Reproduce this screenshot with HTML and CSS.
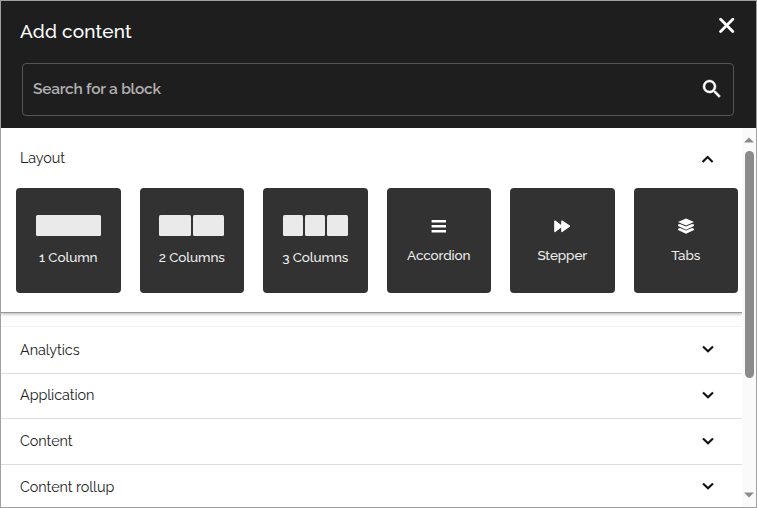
FILE: index.html
```html
<!DOCTYPE html>
<html lang="en">
<head>
<meta charset="utf-8">
<title>Add content</title>
<link rel="stylesheet" href="styles.css">
</head>
<body>
<div class="dialog">
  <header class="header">
    <div class="title-row">
      <h1 class="title">Add content</h1>
      <svg class="close" width="16" height="16" viewBox="0 0 16 16"><path d="M1.6 2.3 13.8 14.5M13.8 2.3 1.6 14.5"/></svg>
    </div>
    <div class="search">
      <span class="placeholder">Search for a block</span>
      <svg width="24" height="24" viewBox="0 0 24 24"><path fill="#fff" stroke="#fff" stroke-width=".5" d="M15.5 14h-.79l-.28-.27A6.47 6.47 0 0 0 16 9.5 6.5 6.5 0 1 0 9.5 16c1.61 0 3.09-.59 4.23-1.57l.27.28v.79l5 4.99L20.49 19l-4.99-5zm-6 0C7.01 14 5 11.99 5 9.5S7.01 5 9.5 5 14 7.01 14 9.5 11.99 14 9.5 14z"/></svg>
    </div>
  </header>
  <div class="body">
    <main class="list">
      <section class="layout">
        <div class="layout-head"><span>Layout</span><svg class="chev" width="12" height="8" viewBox="0 0 12 8"><path d="M.6 7 5.6 2 10.6 7"/></svg></div>
        <div class="cards">
          <div class="card"><div class="cols"><i></i></div><span class="label">1 Column</span></div>
          <div class="card"><div class="cols"><i></i><i></i></div><span class="label">2 Columns</span></div>
          <div class="card"><div class="cols"><i></i><i></i><i></i></div><span class="label">3 Columns</span></div>
          <div class="card icon-card"><svg width="18" height="18" viewBox="0 0 18 18"><path fill="#fff" d="M1.6 3h14.4v2.6H1.6zM1.6 8h14.4v2.6H1.6zM1.6 13h14.4v2.6H1.6z"/></svg><span class="label">Accordion</span></div>
          <div class="card icon-card"><svg width="18" height="18" viewBox="0 0 18 18"><path fill="#fff" stroke="#fff" stroke-width="1.4" stroke-linejoin="round" d="M1.9 4.1 8.9 9.2V4.1L16.4 9.2 8.9 14.4V9.2L1.9 14.4z"/></svg><span class="label">Stepper</span></div>
          <div class="card icon-card"><svg width="18" height="18" viewBox="0 0 18 18"><g fill="#fff"><path d="M9 1.5 17 5 9 8.6 1 5z"/><path d="M1 7.6 3 7 9 9.6 15 7l2 .6v1.5l-8 3.6-8-3.6z"/><path d="m1 11.7 2-.7 6 2.6 6-2.6 2 .7v1.4L9 16.8 1 13.1z"/></g></svg><span class="label">Tabs</span></div>
        </div>
      </section>
      <section class="groups">
        <div class="row r1"><span>Analytics</span><svg class="chev" width="12" height="8" viewBox="0 0 12 8"><path d="M1 1.4 6 6.2 11 1.4"/></svg></div>
        <div class="row r2"><span>Application</span><svg class="chev" width="12" height="8" viewBox="0 0 12 8"><path d="M1 1.4 6 6.2 11 1.4"/></svg></div>
        <div class="row r3"><span>Content</span><svg class="chev" width="12" height="8" viewBox="0 0 12 8"><path d="M1 1.4 6 6.2 11 1.4"/></svg></div>
        <div class="row r4"><span>Content rollup</span><svg class="chev" width="12" height="8" viewBox="0 0 12 8"><path d="M1 1.4 6 6.2 11 1.4"/></svg></div>
      </section>
    </main>
    <div class="scrollbar">
      <svg width="10" height="6" viewBox="0 0 10 6"><path d="M0 5.5 5 .5l5 5z"/></svg>
      <div class="thumb"></div>
      <svg width="10" height="6" viewBox="0 0 10 6"><path d="M0 .5h10l-5 5z"/></svg>
    </div>
  </div>
</div>
</body>
</html>
```
FILE: styles.css
```css
* { box-sizing: border-box; }
body { margin: 0; font-family: Raleway, Lato, sans-serif; color: #222; overflow: hidden; }
svg { display: block; flex: none; }
.dialog { width: 757px; height: 508px; border: 1px solid #a0a0a0; display: flex; flex-direction: column; background: #fff; overflow: hidden; }
.header { height: 127px; background: #1e1e1e; padding: 0 22px 0 21px; flex: none; }
.title-row { height: 62px; display: flex; justify-content: space-between; align-items: flex-start; }
.title { margin: 18px 0 0 -2px; font-size: 19px; line-height: 24px; font-weight: 500; color: #fff; letter-spacing: .2px; white-space: nowrap; }
.close { margin: 16px -1px 0 0; fill: none; stroke: #fff; stroke-width: 2.8; stroke-linecap: round; }
.search { height: 53px; border: 1px solid #555; border-radius: 4px; display: flex; justify-content: space-between; align-items: center; padding: 0 9.5px 0 10px; }
.search svg { margin-top: -1px; }
.placeholder { font-size: 15.5px; line-height: 20px; margin-top: -2px; font-weight: 600; color: #b0b0b0; letter-spacing: -.25px; white-space: nowrap; }
.body { display: flex; flex: 1; min-height: 0; }
.list { width: 741px; flex: none; background: #fdfdfd; overflow: hidden; }
.layout { height: 185px; background: #fff; border-bottom: 1px solid #999; box-shadow: 0 1px 3px rgba(0,0,0,.3); }
.layout-head { height: 60px; padding: 0 28px 0 19px; display: flex; align-items: center; justify-content: space-between; font-size: 14.4px; letter-spacing: -.08px; }
.layout-head span { margin-top: -1px; }
.chev { fill: none; stroke: #111; stroke-width: 2.1; }
.layout-head .chev { margin-top: 2px; }
.cards { display: grid; grid-template-columns: repeat(6, 104.5px); justify-content: space-between; width: 722px; margin-left: 15px; }
.card { height: 105px; background: #323232; border-radius: 4px; display: flex; flex-direction: column; align-items: center; padding-top: 27px; }
.cols { display: flex; gap: 2px; width: 65px; height: 21px; }
.cols i { flex: 1; background: #eaeaea; border-radius: 1.5px; }
.label { margin-top: 12px; font-size: 13.5px; line-height: 18px; font-weight: 500; color: #eee; letter-spacing: -.1px; white-space: nowrap; }
.icon-card { padding-top: 29px; }
.icon-card .label { margin-top: 11px; }
.groups { margin-top: 13px; border-top: 1px solid #f3f3f3; background: #fff; }
.row { display: flex; align-items: center; justify-content: space-between; padding: 0 28px 0 19px; border-bottom: 1px solid #ddd; font-size: 14.4px; letter-spacing: -.08px; }
.row .chev { margin-top: -2px; }
.r1 { height: 47px; }
.r2 { height: 45px; }
.r3, .r4 { height: 46px; }
.row span { margin-top: -2px; }
.r2 span { margin-top: -4px; }
.r4 .chev { margin-top: -4px; }
.scrollbar { width: 14px; background: #fafafa; display: flex; flex-direction: column; align-items: center; padding-top: 9px; }
.scrollbar path { fill: #8b8b8b; }
.thumb { width: 9px; height: 227px; border-radius: 5px; background: #8b8b8b; margin: 8px 0 114px; flex: none; }
```
